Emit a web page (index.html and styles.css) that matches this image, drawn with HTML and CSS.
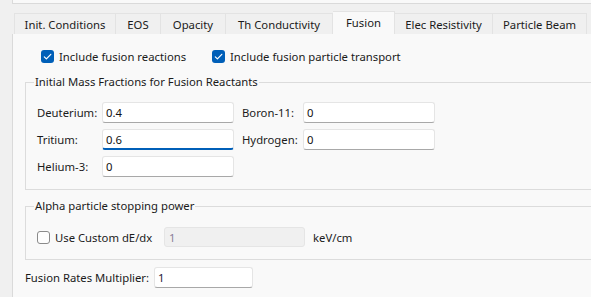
FILE: index.html
```html
<!DOCTYPE html>
<html>
<head>
<meta charset="utf-8">
<link rel="stylesheet" href="styles.css">
</head>
<body>
<div class="top-strip"></div>
<div class="tabs">
  <div class="tab w-init">Init. Conditions</div>
  <div class="tab w-eos">EOS</div>
  <div class="tab w-opac">Opacity</div>
  <div class="tab w-th">Th Conductivity</div>
  <div class="tab tab-active w-fus">Fusion</div>
  <div class="tab w-elec">Elec Resistivity</div>
  <div class="tab w-pb">Particle Beam</div>
</div>
<div class="pane">
  <div class="check-row">
    <label class="check check-1"><span class="box box-on"><svg width="13" height="13" viewBox="0 0 13 13"><path d="M3.3 6.8 L5.4 8.9 L9.8 4.3" fill="none" stroke="#fff" stroke-width="1.2" stroke-linecap="round" stroke-linejoin="round"/></svg></span>Include fusion reactions</label>
    <label class="check"><span class="box box-on"><svg width="13" height="13" viewBox="0 0 13 13"><path d="M3.3 6.8 L5.4 8.9 L9.8 4.3" fill="none" stroke="#fff" stroke-width="1.2" stroke-linecap="round" stroke-linejoin="round"/></svg></span>Include fusion particle transport</label>
  </div>
  <fieldset class="group group-mass">
    <legend>Initial Mass Fractions for Fusion Reactants</legend>
    <div class="mass-grid">
      <span class="lbl">Deuterium:</span><div class="field">0.4</div>
      <span class="lbl">Boron-11:</span><div class="field">0</div>
      <span class="lbl">Tritium:</span><div class="field field-focus">0.6</div>
      <span class="lbl">Hydrogen:</span><div class="field">0</div>
      <span class="lbl">Helium-3:</span><div class="field">0</div>
    </div>
  </fieldset>
  <fieldset class="group group-alpha">
    <legend>Alpha particle stopping power</legend>
    <div class="alpha-row">
      <label class="check check-custom"><span class="box box-off"></span>Use Custom dE/dx</label>
      <div class="field field-disabled">1</div>
      <span class="unit">keV/cm</span>
    </div>
  </fieldset>
  <div class="mult-row">
    <span class="mult-lbl">Fusion Rates Multiplier:</span>
    <div class="field field-mult">1</div>
  </div>
</div>
</body>
</html>
```

FILE: styles.css
```css
* { box-sizing: border-box; }
html, body { margin: 0; padding: 0; }
body {
  width: 591px;
  height: 297px;
  overflow: hidden;
  background: #f0f0f0;
  font-family: "Noto Sans", "Open Sans", sans-serif;
  font-size: 11.3px;
  color: #1b1b1b;
}
.top-strip {
  margin-left: 12px;
  height: 4px;
  background: #f9f9f9;
  border-left: 1px solid #dadada;
  border-bottom: 1px solid #dadada;
}
.tabs {
  display: flex;
  margin-left: 14px;
  margin-top: 9px;
  height: 21px;
  align-items: flex-end;
}
.tab {
  height: 21px;
  border: 1px solid #e3e3e3;
  border-bottom: none;
  border-left: none;
  background: #f0f0f0;
  display: flex;
  align-items: center;
  justify-content: center;
  padding-top: 1px;
  white-space: nowrap;
}
.tab:first-child { border-left: 1px solid #e3e3e3; }
.tab-active {
  height: 23px;
  background: #f9f9f9;
  padding-top: 0;
  padding-bottom: 2px;
}
.w-init { width: 102px; }
.w-eos { width: 45px; }
.w-opac { width: 65px; }
.w-th { width: 107px; }
.w-fus { width: 62px; }
.w-elec { width: 98px; }
.w-pb { width: 94px; }
.pane {
  margin-left: 12px;
  height: 263px;
  background: #f9f9f9;
  border-left: 1px solid #dadada;
  padding-left: 12px;
}
.check-row {
  display: flex;
  padding-top: 16px;
  padding-left: 16px;
  height: 40px;
}
.check {
  display: flex;
  align-items: center;
  height: 13px;
  white-space: nowrap;
}
.check-1 { width: 171px; }
.box {
  width: 13px;
  height: 13px;
  border-radius: 3px;
  margin-right: 5px;
  flex: none;
  display: block;
}
.box svg { display: block; }
.box-on { background: #005fb8; }
.box-off { border: 1px solid #8a8a8a; background: #fdfdfd; }
.group {
  margin: 0;
  min-width: 0;
  border: 1px solid #dcdcdc;
  border-right: none;
  padding: 0 0 0 11px;
}
.group legend {
  margin-left: -3px;
  padding: 0 1px;
  line-height: 16px;
}
.group-mass {
  height: 116px;
  padding-top: 12px;
}
.mass-grid {
  display: grid;
  grid-template-columns: 65px 132px 69px 132px;
  grid-auto-rows: 21px;
  row-gap: 6px;
  align-items: center;
}
.mass-grid .lbl:nth-of-type(even) { padding-left: 8px; }
.lbl { white-space: nowrap; }
.field {
  height: 21px;
  background: #ffffff;
  border: 1px solid #e5e5e5;
  border-bottom: 1px solid #a8a8a8;
  border-radius: 3px;
  padding-left: 3px;
  line-height: 19px;
  color: #111;
}
.field-focus {
  border-bottom: 2px solid #005fb8;
}
.group-alpha {
  margin-top: 8px;
  height: 62px;
  padding-top: 13px;
}
.alpha-row {
  display: flex;
  align-items: center;
}
.check-custom { width: 127px; }
.field-disabled {
  width: 141px;
  height: 20px;
  background: #f0f0f0;
  border: 1px solid #e5e5e5;
  color: #8a7f99;
  padding-left: 4px;
}
.unit { margin-left: 8px; }
.mult-row {
  display: flex;
  align-items: center;
  margin-top: 7px;
}
.mult-lbl { width: 129px; white-space: nowrap; }
.field-mult { width: 99px; color: #2a1a3a; }
```
